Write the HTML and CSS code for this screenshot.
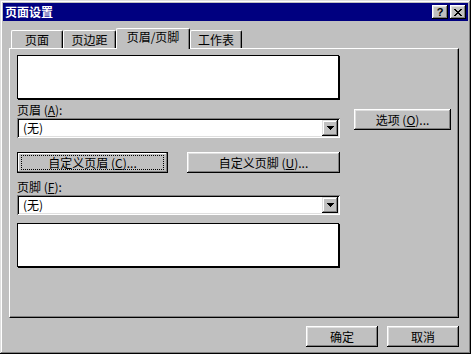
FILE: index.html
```html
<!DOCTYPE html>
<html lang="zh-CN">
<head>
  <meta charset="UTF-8" />
  <title>页面设置</title>
  <link rel="stylesheet" href="styles.css">
</head>
<body>
  <div class="window">
    <div class="titlebar">
      <span class="title">页面设置</span>
      <div class="caption-buttons">
        <button class="cap-btn help">?</button>
        <button class="cap-btn close">
          <svg width="8" height="7" viewBox="0 0 8 7" shape-rendering="crispEdges">
            <path d="M0 0h2v1h-2z M6 0h2v1h-2z M1 1h2v1h-2z M5 1h2v1h-2z M2 2h4v1h-4z M3 3h2v1h-2z M2 4h4v1h-4z M1 5h2v1h-2z M5 5h2v1h-2z M0 6h2v1h-2z M6 6h2v1h-2z" fill="#000"/>
          </svg>
        </button>
      </div>
    </div>

    <div class="dialog-body">
      <div class="tabs">
        <div class="tab">页面</div>
        <div class="tab">页边距</div>
        <div class="tab active">页眉/页脚</div>
        <div class="tab">工作表</div>
      </div>

      <div class="panel">
        <div class="left-col">
          <div class="preview"></div>

          <div class="field-label">页眉 (<u>A</u>):</div>
          <div class="combo">
            <span class="combo-text">(无)</span>
            <span class="drop">
              <svg width="7" height="4" viewBox="0 0 7 4" shape-rendering="crispEdges">
                <path d="M0 0h7v1h-1v1h-1v1h-1v1h-1v-1h-1v-1h-1v-1h-1z" fill="#000"/>
              </svg>
            </span>
          </div>

          <div class="custom-row">
            <button class="btn focused"><span class="focus-rect">自定义页眉 (<u>C</u>)...</span></button>
            <button class="btn">自定义页脚 (<u>U</u>)...</button>
          </div>

          <div class="field-label second">页脚 (<u>F</u>):</div>
          <div class="combo">
            <span class="combo-text">(无)</span>
            <span class="drop">
              <svg width="7" height="4" viewBox="0 0 7 4" shape-rendering="crispEdges">
                <path d="M0 0h7v1h-1v1h-1v1h-1v1h-1v-1h-1v-1h-1v-1h-1z" fill="#000"/>
              </svg>
            </span>
          </div>

          <div class="preview footer-preview"></div>
        </div>

        <div class="right-col">
          <button class="btn options">选项 (<u>O</u>)...</button>
        </div>
      </div>

      <div class="dialog-buttons">
        <button class="btn">确定</button>
        <button class="btn">取消</button>
      </div>
    </div>
  </div>
</body>
</html>
```

FILE: styles.css
```css
* {
  box-sizing: border-box;
}

body {
  margin: 0;
  background-color: #c0c0c0;
  font-family: "Noto Sans CJK SC", "Liberation Sans", sans-serif;
  font-size: 12px;
  color: #000;
}

.window {
  width: 471px;
  height: 354px;
  padding: 3px;
  background-color: #c0c0c0;
  box-shadow: inset -1px -1px #000, inset 1px 1px #dfdfdf,
              inset -2px -2px #808080, inset 2px 2px #fff;
}

.titlebar {
  height: 18px;
  background-color: #000080;
  display: flex;
  align-items: center;
  justify-content: space-between;
  padding: 0 2px;
}

.title {
  color: #fff;
  font-weight: bold;
  font-size: 12px;
  line-height: 14px;
}

.caption-buttons {
  display: flex;
  gap: 2px;
}

.cap-btn {
  width: 16px;
  height: 14px;
  padding: 0;
  border: 0;
  background-color: #c0c0c0;
  display: flex;
  align-items: center;
  justify-content: center;
  box-shadow: inset -1px -1px #000, inset 1px 1px #fff,
              inset -2px -2px #808080, inset 2px 2px #dfdfdf;
}

.help {
  font-family: "Liberation Sans", sans-serif;
  font-weight: bold;
  font-size: 11px;
  line-height: 12px;
}

.dialog-body {
  padding: 7px 0 0 6px;
}

.tabs {
  display: grid;
  grid-template-columns: 52px 53px 74px 52px;
  align-items: end;
  height: 20px;
  padding-left: 2px;
}

.tab {
  height: 18px;
  text-align: center;
  line-height: 16px;
  padding-top: 1px;
  background-color: #c0c0c0;
  border-top: 1px solid #fff;
  border-left: 1px solid #fff;
  border-right: 1px solid #000;
  border-radius: 2px 2px 0 0;
  box-shadow: inset -1px 0 #808080;
}

.tab.active {
  height: 21px;
  margin-bottom: -1px;
  padding-top: 0;
  position: relative;
  z-index: 1;
}

.panel {
  width: 450px;
  height: 270px;
  border: 1px solid;
  border-color: #fff #000 #000 #fff;
  box-shadow: inset -1px -1px #808080;
  padding: 6px 0 0 7px;
  display: flex;
  gap: 14px;
}

.left-col {
  width: 323px;
  display: flex;
  flex-direction: column;
}

.preview {
  width: 322px;
  height: 44px;
  background-color: #fff;
  border: 1px solid #000;
  box-shadow: 1px 1px 0 #000;
}

.footer-preview {
  margin-top: 8px;
}

.field-label {
  margin-top: 4px;
  height: 14px;
  line-height: 14px;
}

.field-label.second {
  margin-top: 7px;
}

.combo {
  margin-top: 1px;
  height: 20px;
  padding: 2px;
  background-color: #fff;
  display: flex;
  align-items: center;
  justify-content: space-between;
  box-shadow: inset 1px 1px #808080, inset -1px -1px #fff,
              inset 2px 2px #000, inset -2px -2px #dfdfdf;
}

.combo-text {
  padding-left: 4px;
  line-height: 14px;
}

.drop {
  width: 16px;
  height: 16px;
  background-color: #c0c0c0;
  display: flex;
  align-items: center;
  justify-content: center;
  box-shadow: inset -1px -1px #000, inset 1px 1px #dfdfdf,
              inset -2px -2px #808080, inset 2px 2px #fff;
}

.custom-row {
  margin-top: 14px;
  display: grid;
  grid-template-columns: 151px 153px;
  justify-content: space-between;
}

.btn {
  font: inherit;
  color: #000;
  height: 21px;
  padding: 0;
  border: 0;
  background-color: #c0c0c0;
  display: flex;
  align-items: center;
  justify-content: center;
  line-height: 14px;
  box-shadow: inset -1px -1px #000, inset 1px 1px #fff,
              inset -2px -2px #808080, inset 2px 2px #dfdfdf;
}

.btn.focused {
  box-shadow: inset 0 0 0 1px #000, inset -2px -2px #808080,
              inset 2px 2px #fff;
  padding: 3px 4px;
}

.focus-rect {
  flex: 1;
  align-self: stretch;
  display: flex;
  align-items: center;
  justify-content: center;
  border: 1px dotted #000;
}

.right-col {
  padding-top: 54px;
}

.options {
  width: 97px;
}

.dialog-buttons {
  width: 450px;
  margin-top: 8px;
  display: flex;
  justify-content: flex-end;
  gap: 9px;
}

.dialog-buttons .btn {
  width: 72px;
}
```
